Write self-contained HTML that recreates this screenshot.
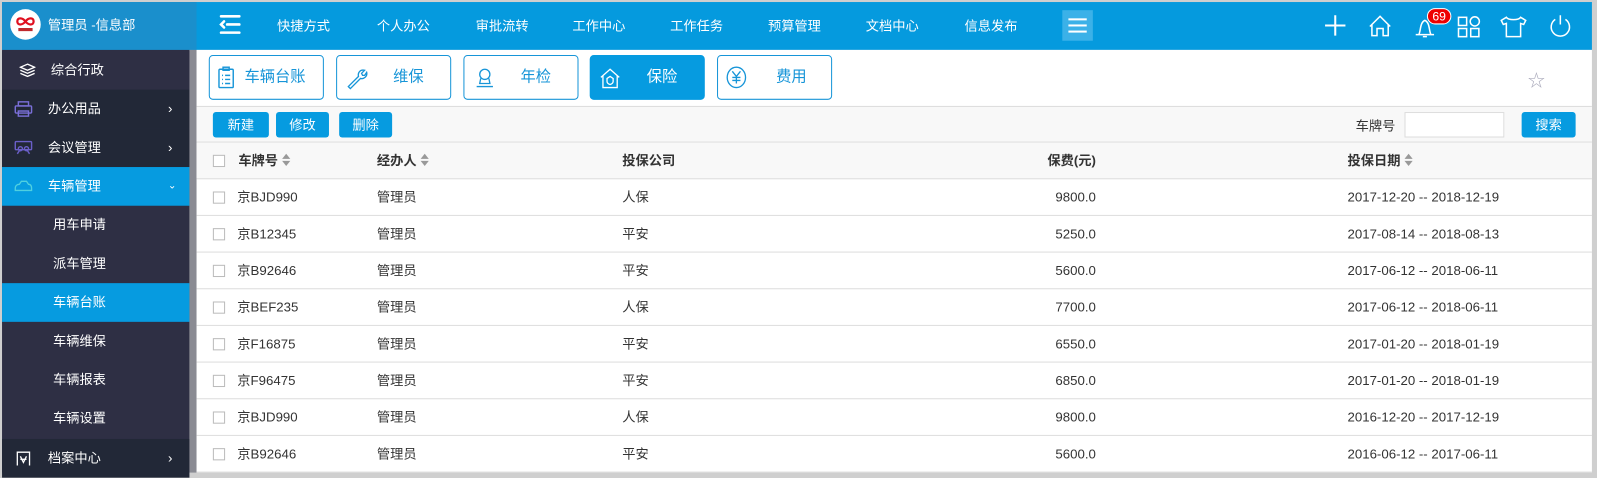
<!DOCTYPE html>
<html><head><meta charset="utf-8"><style>
*{margin:0;padding:0;box-sizing:border-box}
body{width:1597px;height:475px;background:#cfcfcf;font-family:"Liberation Sans","Noto Sans CJK SC",sans-serif;font-size:13px;color:#333;position:relative;overflow:hidden}
#wrap{position:absolute;left:0;top:0;width:1568px;height:466px;transform:scale(1.0185);transform-origin:0 0}
.abs{position:absolute}
#top{left:2px;top:2px;width:1561px;height:47px;background:#059ade}
#brand{left:2px;top:2px;width:191px;height:47px;background:#1a8fcc;color:#fff;font-size:13px}
#side{left:2px;top:49px;width:184px;height:415px;background:#2e2f44}
#sb{left:186px;top:49px;width:7px;height:415px;background:#8a8b93}
.si{position:absolute;left:0;width:184px;height:38px;color:#fff;font-size:13px;line-height:38px}
.nav{position:absolute;top:0;line-height:47px;color:#fff;font-size:13px}
#main{left:193px;top:49px;width:1370px;height:415px;background:#fff}
.tab{position:absolute;top:5px;height:44px;border:1px solid #1795d8;border-radius:4px;color:#1795d8;font-size:15px;line-height:42px}
.btn{position:absolute;top:61px;height:25px;background:#069be0;color:#fff;border-radius:3px;font-size:13px;line-height:25px;text-align:center}
.row{position:absolute;left:0;width:1370px;height:36px;border-bottom:1px solid #ddd;line-height:36px}
.row span{position:absolute}
.row span.r{left:auto;right:487px}
.cb{position:absolute;left:16px;top:12px;width:12px;height:12px;border:1px solid #bbb;background:#fff}
.hd{font-weight:bold;color:#333}
.sort{display:inline-block;width:8px;height:12px;vertical-align:-1px;margin-left:4px;position:relative}
.sort:before{content:"";position:absolute;top:0;left:0;border:4px solid transparent;border-bottom:5px solid #999;border-top:0}
.sort:after{content:"";position:absolute;top:7px;left:0;border:4px solid transparent;border-top:5px solid #999;border-bottom:0}
</style></head><body><div id="wrap">
<div id="top" class="abs"></div>
<div id="brand" class="abs">
 <div class="abs" style="left:8px;top:7px;width:30px;height:30px;border-radius:50%;background:#fff"><svg class="abs" style="left:5px;top:5px" width="20" height="20" fill="none" stroke="#e01020" stroke-width="2.2"><path d="M10 7C7 3 2 3 2 7C2 11 7 11 10 7C13 3 18 3 18 7C18 11 13 11 10 7Z"/><path d="M3 15H17" stroke-width="3" stroke="#c0282d"/></svg></div>
 <div class="abs" style="left:45px;top:0;line-height:45px">管理员 -信息部</div>
</div>
<svg class="abs" style="left:215px;top:14px" width="22" height="20"><g stroke="#fff" stroke-width="2.5" fill="none" stroke-linecap="round"><path d="M2 2H20M8 10H20M2 18H20M5 7L2 10L5 13"/></g></svg>
<div class="abs" style="left:0;top:2px;width:1100px;height:47px">
<span class="nav" style="left:272px">快捷方式</span><span class="nav" style="left:370px">个人办公</span><span class="nav" style="left:467px">审批流转</span><span class="nav" style="left:562px">工作中心</span><span class="nav" style="left:658px">工作任务</span><span class="nav" style="left:754px">预算管理</span><span class="nav" style="left:850px">文档中心</span><span class="nav" style="left:947px">信息发布</span>
</div>
<div class="abs" style="left:1043px;top:10px;width:30px;height:30px;background:#3bb1e8"><div class="abs" style="left:6px;top:8px;width:18px;height:2px;background:#fff;box-shadow:0 6px 0 #fff,0 12px 0 #fff"></div></div>
<svg class="abs" style="left:1298px;top:12px" width="260" height="28" fill="none" stroke="#fff" stroke-width="1.5">
 <path d="M3 13H23M13 3V23" stroke-width="2"/>
 <path d="M47 14L57 4L67 14M49 12V23H54V16H60V23H65V12"/>
 <path d="M92 22H110M95 22C97 19 96 10 101 8C106 10 105 19 107 22M99 24H103"/>
 <rect x="134" y="5" width="8" height="8"/><circle cx="150" cy="9" r="4.5"/><rect x="134" y="16" width="8" height="8"/><rect x="146" y="16" width="8" height="8"/>
 <path d="M181 5L176 8L178 12L181 11V24H195V11L198 12L200 8L195 5C193 8 183 8 181 5Z"/>
 <path d="M229 7A9 9 0 1 0 239 7M234 3V12"/>
</svg>
<div class="abs" style="left:1401px;top:8px;width:24px;height:16px;background:#e00;border:1px solid #fff;border-radius:8px;color:#fff;font-size:12px;line-height:14px;text-align:center">69</div>

<div id="side" class="abs">
 <div class="si" style="top:1px;background:#2e2f44"><svg class="abs" style="left:17px;top:12px" width="16" height="14" fill="none" stroke="#fff" stroke-width="1.3"><path d="M8 1L15 4L8 7L1 4Z"/><path d="M1 7L8 10L15 7M1 10L8 13L15 10"/></svg><span style="position:absolute;left:48px">综合行政</span></div>
 <div class="si" style="top:39px;background:#222837"><svg class="abs" style="left:12px;top:11px" width="18" height="16" fill="none" stroke="#7a6fd8" stroke-width="1.4"><rect x="4" y="1" width="10" height="4"/><rect x="1" y="5" width="16" height="7" rx="1"/><rect x="4" y="10" width="10" height="5"/></svg><span style="position:absolute;left:45px">办公用品</span><span style="position:absolute;left:163px">›</span></div>
 <div class="si" style="top:77px;background:#222837"><svg class="abs" style="left:12px;top:12px" width="18" height="14" fill="none" stroke="#6a5fc8" stroke-width="1.4"><rect x="1" y="1" width="16" height="8" rx="1"/><circle cx="6" cy="8" r="2"/><circle cx="12" cy="8" r="2"/><path d="M3 13L5 10M15 13L13 10"/></svg><span style="position:absolute;left:45px">会议管理</span><span style="position:absolute;left:163px">›</span></div>
 <div class="si" style="top:115px;background:#069be0"><svg class="abs" style="left:12px;top:13px" width="18" height="12" fill="none" stroke="#4fd0e0" stroke-width="1.3"><path d="M1 8C1 5 3 4 5 4L7 1H12L14 4C16 4 17 5 17 8V10H1Z"/></svg><span style="position:absolute;left:45px">车辆管理</span><span style="position:absolute;left:163px;font-size:10px">⌄</span></div>
 <div class="si" style="top:153px"><span style="position:absolute;left:50px">用车申请</span></div>
 <div class="si" style="top:191px"><span style="position:absolute;left:50px">派车管理</span></div>
 <div class="si" style="top:229px;background:#069be0"><span style="position:absolute;left:50px">车辆台账</span></div>
 <div class="si" style="top:267px"><span style="position:absolute;left:50px">车辆维保</span></div>
 <div class="si" style="top:305px"><span style="position:absolute;left:50px">车辆报表</span></div>
 <div class="si" style="top:343px"><span style="position:absolute;left:50px">车辆设置</span></div>
 <div class="si" style="top:382px;background:#222837"><svg class="abs" style="left:13px;top:11px" width="16" height="16" fill="none" stroke="#fff" stroke-width="1.3"><path d="M2 15V2H14V15M5 6L8 12L11 6M5 9H11"/></svg><span style="position:absolute;left:45px">档案中心</span><span style="position:absolute;left:163px">›</span></div>
</div>
<div id="sb" class="abs"></div>

<div id="main" class="abs">
 <div class="tab" style="left:12px;width:113px"><svg class="abs" style="left:8px;top:10px" width="16" height="22" fill="none" stroke="#1795d8" stroke-width="1.4"><rect x="1" y="3" width="14" height="18" rx="1"/><rect x="5" y="1" width="6" height="3"/><path d="M4 9H5M7 9H12M4 13H5M7 13H12M4 17H5M7 17H12"/></svg><span class="abs" style="left:34px">车辆台账</span></div>
 <div class="tab" style="left:137px;width:113px"><svg class="abs" style="left:8px;top:11px" width="22" height="22" fill="none" stroke="#1795d8" stroke-width="1.3"><path d="M3 19L13 9C12 5 15 2 19 3L16 6L17 8L19 8L21 5C22 9 18 12 15 11L5 21Z"/></svg><span class="abs" style="left:55px">维保</span></div>
 <div class="tab" style="left:262px;width:113px"><svg class="abs" style="left:10px;top:10px" width="20" height="22" fill="none" stroke="#1795d8" stroke-width="1.3"><circle cx="10" cy="8" r="5"/><path d="M6 12L5 17H15L14 12M2 20H18"/></svg><span class="abs" style="left:55px">年检</span></div>
 <div class="tab" style="left:386px;width:113px;background:#069be0;border-color:#069be0;color:#fff"><svg class="abs" style="left:8px;top:11px" width="22" height="22" fill="none" stroke="#fff" stroke-width="1.3"><path d="M2 10L11 2L20 10M4 8V20H18V8M11 9L8 11V14C8 16 11 17 11 17C11 17 14 16 14 14V11Z"/></svg><span class="abs" style="left:55px">保险</span></div>
 <div class="tab" style="left:511px;width:113px"><svg class="abs" style="left:6px;top:9px" width="24" height="24" fill="none" stroke="#1795d8" stroke-width="1.3"><ellipse cx="12" cy="12" rx="9" ry="10"/><path d="M8 6L12 11L16 6M12 11V18M8 12H16M8 15H16"/></svg><span class="abs" style="left:57px">费用</span></div>
 <div class="abs" style="left:1307px;top:16px;color:#aab;font-size:17px">☆</div>
 <div class="abs" style="left:0;top:55px;width:1370px;height:36px;background:#f8f8f8;border-top:1px solid #ddd;border-bottom:1px solid #ddd"></div>
 <div class="btn" style="left:16px;width:55px">新建</div>
 <div class="btn" style="left:78px;width:52px">修改</div>
 <div class="btn" style="left:140px;width:52px">删除</div>
 <div class="abs" style="left:1138px;top:64px">车牌号</div>
 <div class="abs" style="left:1186px;top:61px;width:98px;height:25px;border:1px solid #ddd;background:#fff"></div>
 <div class="btn" style="left:1301px;width:53px">搜索</div>
 <div class="row hd" style="top:91px;background:#f8f8f8"><div class="cb"></div><span style="left:41px">车牌号<i class="sort"></i></span><span style="left:177px">经办人<i class="sort"></i></span><span style="left:418px">投保公司</span><span class="r">保费(元)</span><span style="left:1130px">投保日期<i class="sort"></i></span></div>
 <div class="row" style="top:127px"><div class="cb"></div><span style="left:40px">京BJD990</span><span style="left:177px">管理员</span><span style="left:418px">人保</span><span class="r">9800.0</span><span style="left:1130px">2017-12-20 -- 2018-12-19</span></div>
 <div class="row" style="top:163px"><div class="cb"></div><span style="left:40px">京B12345</span><span style="left:177px">管理员</span><span style="left:418px">平安</span><span class="r">5250.0</span><span style="left:1130px">2017-08-14 -- 2018-08-13</span></div>
 <div class="row" style="top:199px"><div class="cb"></div><span style="left:40px">京B92646</span><span style="left:177px">管理员</span><span style="left:418px">平安</span><span class="r">5600.0</span><span style="left:1130px">2017-06-12 -- 2018-06-11</span></div>
 <div class="row" style="top:235px"><div class="cb"></div><span style="left:40px">京BEF235</span><span style="left:177px">管理员</span><span style="left:418px">人保</span><span class="r">7700.0</span><span style="left:1130px">2017-06-12 -- 2018-06-11</span></div>
 <div class="row" style="top:271px"><div class="cb"></div><span style="left:40px">京F16875</span><span style="left:177px">管理员</span><span style="left:418px">平安</span><span class="r">6550.0</span><span style="left:1130px">2017-01-20 -- 2018-01-19</span></div>
 <div class="row" style="top:307px"><div class="cb"></div><span style="left:40px">京F96475</span><span style="left:177px">管理员</span><span style="left:418px">平安</span><span class="r">6850.0</span><span style="left:1130px">2017-01-20 -- 2018-01-19</span></div>
 <div class="row" style="top:343px"><div class="cb"></div><span style="left:40px">京BJD990</span><span style="left:177px">管理员</span><span style="left:418px">人保</span><span class="r">9800.0</span><span style="left:1130px">2016-12-20 -- 2017-12-19</span></div>
 <div class="row" style="top:379px"><div class="cb"></div><span style="left:40px">京B92646</span><span style="left:177px">管理员</span><span style="left:418px">平安</span><span class="r">5600.0</span><span style="left:1130px">2016-06-12 -- 2017-06-11</span></div>
</div>
</div></body></html>
